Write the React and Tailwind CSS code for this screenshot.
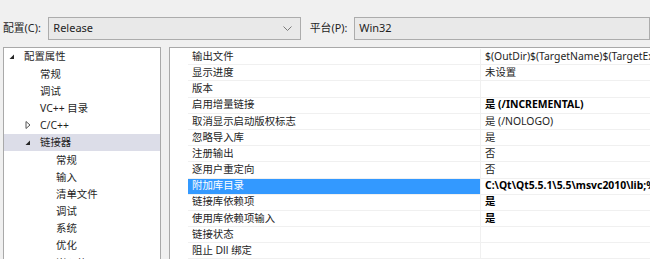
import React from 'react';

const font = { fontFamily: '"Segoe UI", "Noto Sans", "Noto Sans CJK SC", sans-serif' };

const tree = [
  { label: '配置属性', level: 0, arrow: 'open' },
  { label: '常规', level: 1 },
  { label: '调试', level: 1 },
  { label: 'VC++ 目录', level: 1 },
  { label: 'C/C++', level: 1, arrow: 'closed' },
  { label: '链接器', level: 1, arrow: 'open', selected: true },
  { label: '常规', level: 2 },
  { label: '输入', level: 2 },
  { label: '清单文件', level: 2 },
  { label: '调试', level: 2 },
  { label: '系统', level: 2 },
  { label: '优化', level: 2 },
  { label: '嵌入的 IDL', level: 2 },
];

const props = [
  { name: '输出文件', value: '$(OutDir)$(TargetName)$(TargetExt)' },
  { name: '显示进度', value: '未设置' },
  { name: '版本', value: '' },
  { name: '启用增量链接', value: '是 (/INCREMENTAL)', bold: true },
  { name: '取消显示启动版权标志', value: '是 (/NOLOGO)' },
  { name: '忽略导入库', value: '是' },
  { name: '注册输出', value: '否' },
  { name: '逐用户重定向', value: '否' },
  { name: '附加库目录', value: 'C:\\Qt\\Qt5.5.1\\5.5\\msvc2010\\lib;%(AdditionalLibraryDirectories)', bold: true, selected: true },
  { name: '链接库依赖项', value: '是', bold: true },
  { name: '使用库依赖项输入', value: '是', bold: true },
  { name: '链接状态', value: '' },
  { name: '阻止 Dll 绑定', value: '' },
];

const Arrow = ({ type }) =>
  type === 'open' ? (
    <svg width="8" height="8" viewBox="0 0 8 8" className="shrink-0">
      <polygon points="6,1.5 6,6 1.5,6" fill="#262626" />
    </svg>
  ) : (
    <svg width="8" height="8" viewBox="0 0 8 8" className="shrink-0">
      <polygon points="2,0.5 6,4 2,7.5" fill="none" stroke="#555" strokeWidth="1" />
    </svg>
  );

const Combo = ({ value, chevron, className }) => (
  <div className={`h-[23px] border border-[#acacac] bg-[#e9e9e9] flex items-center pl-[4px] pr-[8px] text-[#1e1e1e] ${className}`}>
    <span className="flex-1 text-[11px]">{value}</span>
    {chevron && (
      <svg width="9" height="6" viewBox="0 0 9 6">
        <polyline points="0.5,0.5 4.5,4.5 8.5,0.5" fill="none" stroke="#7a7a7a" strokeWidth="1" />
      </svg>
    )}
  </div>
);

export default function App() {
  return (
    <div className="w-[650px] h-[259px] overflow-hidden bg-[#f0f0f0] text-[10.4px] text-[#1e1e1e]" style={font}>
      <div className="flex items-center pt-[17px] h-[40px]">
        <span className="pl-[3px] w-[49px] text-[10.8px]">配置(C):</span>
        <Combo value="Release" chevron className="w-[256px]" />
        <span className="ml-[9px] w-[45px] text-[10.8px]">平台(P):</span>
        <Combo value="Win32" className="w-[300px]" />
      </div>

      <div className="flex mt-[7px] h-[230px]">
        <div className="ml-[3px] w-[158px] shrink-0 border border-[#a9a9a9] bg-white">
          {tree.map((t, i) => (
            <div
              key={i}
              className={`h-[17.2px] flex items-center leading-none ${t.selected ? 'bg-[#dcdde8]' : ''}`}
              style={{ paddingLeft: 4 + t.level * 16 }}
            >
              <span className="w-[16px] flex items-center">{t.arrow && <Arrow type={t.arrow} />}</span>
              <span>{t.label}</span>
            </div>
          ))}
        </div>

        <div className="ml-[8px] w-[600px] shrink-0 border border-[#a9a9a9] bg-white pt-[1px]">
          {props.map((p, i) => (
            <div key={i} className="h-[16.2px] flex">
              <div className="w-[18px] shrink-0" />
              <div
                className={`w-[292px] shrink-0 flex items-center pl-[4px] border-b border-[#f0f0f0] ${p.selected ? 'bg-[#3399ff] text-white' : ''}`}
              >
                {p.name}
              </div>
              <div className="flex-1 flex items-center pl-[4px] border-l border-b border-[#f0f0f0] whitespace-nowrap overflow-hidden">
                <span className={p.bold ? 'font-bold text-black' : ''}>{p.value}</span>
              </div>
            </div>
          ))}
        </div>
      </div>
    </div>
  );
}
